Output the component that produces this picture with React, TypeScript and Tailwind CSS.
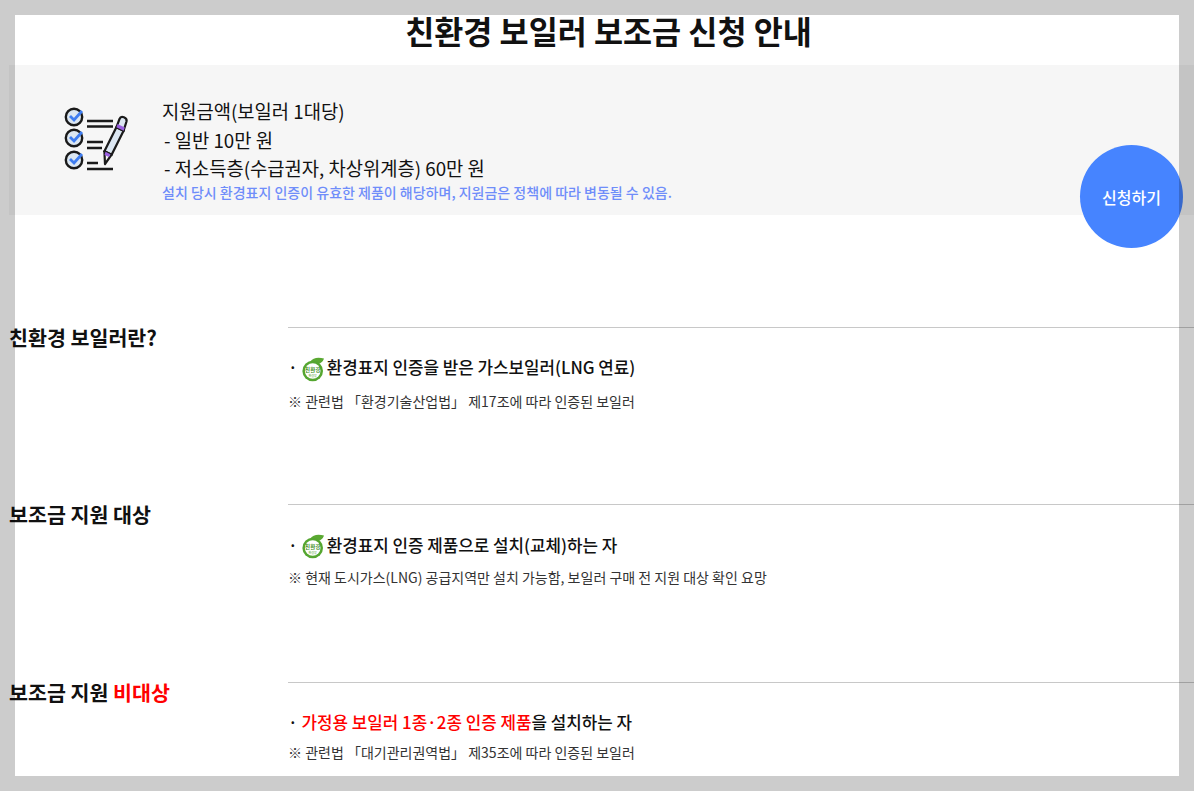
const font = { fontFamily: '"Noto Sans CJK KR", "Noto Sans", sans-serif' };

const EcoBadge = () => (
  <svg width="23" height="25" viewBox="0 0 23 25" className="mt-[3px] shrink-0 self-start">
    <path d="M8 5 C11 0 17 0 22 1.5 C21 5 17 8 12 7 Z" fill="#5aa832" />
    <circle cx="10.7" cy="14" r="10.3" fill="#55a630" />
    <circle cx="10.7" cy="14" r="7.8" fill="#fff" />
    <text x="10.7" y="15" textAnchor="middle" fontSize="5.5" fontWeight="700" fill="#3f8f28">친환경</text>
    <text x="10.7" y="19.5" textAnchor="middle" fontSize="3" fill="#6bb04a">환경부</text>
  </svg>
);

const ChecklistIcon = () => (
  <svg width="66" height="66" viewBox="0 0 66 66">
    {[10, 31, 53].map((cy) => (
      <g key={cy}>
        <circle cx="10" cy={cy} r="8.2" fill="#dce7f2" stroke="#1a1a1a" strokeWidth="2.4" />
        <path d={`M6 ${cy - 1} l4 4 l8 -9`} fill="none" stroke="#3f7df0" strokeWidth="2.8" />
      </g>
    ))}
    <path
      d="M23 14 H49 M23 19.5 H49 M23 35 H39 M23 41 H38 M23 56 H34 M23 62 H49"
      stroke="#1a1a1a"
      strokeWidth="2.4"
    />
    <path d="M52.4 20.3 L59.6 23.7 L47.6 47.7 L40.4 44.3 Z" fill="#dce7f2" stroke="#1a1a1a" strokeWidth="2.2" />
    <path d="M40.4 44.3 L47.6 47.7 L41 57 Z" fill="#f4f4f4" stroke="#1a1a1a" strokeWidth="2.2" strokeLinejoin="round" />
    <path d="M41.5 44.8 L46.5 47.2 L45 50 L40.5 48 Z" fill="#9a5fe0" />
    <path d="M52.4 20.3 L55.5 12 C57 8 63.5 10.5 62.5 14.5 L59.6 23.7 Z" fill="#dce7f2" stroke="#1a1a1a" strokeWidth="2.2" />
    <path d="M52.4 20.3 L59.6 23.7 L60.8 20.5 L53.6 17.1 Z" fill="#9a5fe0" />
  </svg>
);

const Section = ({
  heading,
  children,
}: {
  heading: React.ReactNode;
  children: React.ReactNode;
}) => (
  <div className="flex h-[177.4px]">
    <h3 className="w-[279px] shrink-0 text-[20.6px] leading-[21px] font-semibold text-[#111]">{heading}</h3>
    <div className="flex-1 border-t border-[#c8c8c8] pt-[26px]">{children}</div>
  </div>
);

export default function App() {
  return (
    <div className="relative h-[791px] w-full overflow-hidden bg-white" style={font}>
      <div className="ml-[9px] w-[1199px]">
        <h1 className="h-[65px] pt-[11px] text-center text-[31.6px] leading-[38px] font-bold text-[#111]">
          친환경 보일러 보조금 신청 안내
        </h1>
        <div className="flex h-[150px] bg-[#f6f6f6]">
          <div className="ml-[55px] mt-[42px] h-[66px] w-[66px] shrink-0">
            <ChecklistIcon />
          </div>
          <div className="ml-[32px] pt-[32px] text-[18.75px] leading-[28.5px] text-[#111]">
            <p>지원금액(보일러 1대당)</p>
            <p className="pl-[2px]">- 일반 10만 원</p>
            <p className="pl-[2px]">- 저소득층(수급권자, 차상위계층) 60만 원</p>
            <p className="text-[14px] leading-[18px] font-medium text-[#6f8dfa]">
              설치 당시 환경표지 인증이 유효한 제품이 해당하며, 지원금은 정책에 따라 변동될 수 있음.
            </p>
          </div>
        </div>
        <div className="pt-[112px]">
          <Section heading="친환경 보일러란?">
            <div className="flex h-[26px] items-center text-[16.85px] font-medium text-[#111]">
              <span className="mr-[4px]">·</span>
              <EcoBadge />
              <span className="ml-[2px]">환경표지 인증을 받은 가스보일러(LNG 연료)</span>
            </div>
            <p className="mt-[11px] text-[14px] leading-[20px] text-[#333]">
              ※ 관련법 「환경기술산업법」 제17조에 따라 인증된 보일러
            </p>
          </Section>
          <Section heading="보조금 지원 대상">
            <div className="flex h-[26px] items-center text-[16.85px] font-medium text-[#111]">
              <span className="mr-[4px]">·</span>
              <EcoBadge />
              <span className="ml-[2px]">환경표지 인증 제품으로 설치(교체)하는 자</span>
            </div>
            <p className="mt-[10px] text-[14px] leading-[20px] text-[#333]">
              ※ 현재 도시가스(LNG) 공급지역만 설치 가능함, 보일러 구매 전 지원 대상 확인 요망
            </p>
          </Section>
          <Section
            heading={
              <>
                보조금 지원 <span className="text-[#ff0000]">비대상</span>
              </>
            }
          >
            <p className="h-[26px] text-[16.85px] leading-[26px] font-medium text-[#111]">
              · <span className="text-[#ff0000]">가정용 보일러 1종·2종 인증 제품</span>을 설치하는 자
            </p>
            <p className="mt-[7px] text-[14px] leading-[20px] text-[#333]">
              ※ 관련법 「대기관리권역법」 제35조에 따라 인증된 보일러
            </p>
          </Section>
        </div>
      </div>
      <button className="absolute top-[145px] left-[1080px] h-[103px] w-[103px] rounded-full bg-[#4684ff] text-[16px] font-medium text-white">
        신청하기
      </button>
      {/* scroll frame over the page */}
      <div className="pointer-events-none absolute inset-0 border-[15px] border-black/20" />
    </div>
  );
}
